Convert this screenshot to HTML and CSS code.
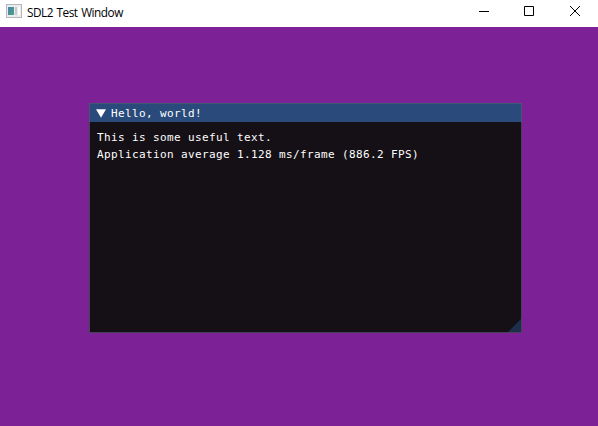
FILE: index.html
```
<!DOCTYPE html>
<html lang="en">
<head>
<meta charset="utf-8">
<title>SDL2 Test Window</title>
<link rel="stylesheet" href="styles.css">
</head>
<body>
<header class="titlebar">
  <svg class="app-icon" width="16" height="14" viewBox="0 0 16 14" shape-rendering="crispEdges">
    <defs><linearGradient id="pane" x1="0" y1="0" x2="1" y2="1"><stop offset="0" stop-color="#4a80ad"/><stop offset="1" stop-color="#4fa282"/></linearGradient></defs>
    <rect x="0.5" y="0.5" width="15" height="13" fill="#e9ebed" stroke="#b3b8bf"/>
    <rect x="2" y="3" width="6" height="8" fill="url(#pane)"/>
    <rect x="9" y="3" width="2" height="8" fill="#c3cdd3"/>
    <rect x="12" y="3" width="2" height="8" fill="#fff"/>
  </svg>
  <span class="app-title">SDL2 Test Window</span>
  <div class="controls">
    <svg width="11" height="10" viewBox="0 0 11 10"><path d="M1 5.5H11"/></svg>
    <svg width="10" height="10" viewBox="0 0 10 10"><path d="M.5.5H9.5V9.5H.5Z"/></svg>
    <svg width="10" height="10" viewBox="0 0 10 10"><path d="M0 0L10 10M10 0L0 10"/></svg>
  </div>
</header>
<main class="canvas">
  <section class="panel">
    <div class="panel-head">
      <svg class="arrow" width="10" height="9" viewBox="0 0 10 9"><path d="M0 .2H10L5 8.8Z" fill="#fff"/></svg>
      <span>Hello, world!</span>
    </div>
    <div class="panel-body">
      <p>This is some useful text.</p>
      <p>Application average 1.128 ms/frame (886.2 FPS)</p>
    </div>
    <svg class="grip" width="13" height="13" viewBox="0 0 13 13"><path d="M13 0V13H0Z" fill="#1d2f4b"/></svg>
  </section>
</main>
</body>
</html>
```
FILE: styles.css
```
* { box-sizing: border-box; }
body {
  margin: 0;
  height: 426px;
  display: flex;
  flex-direction: column;
  overflow: hidden;
  background: #7c2196;
}
.titlebar {
  height: 27px;
  flex: none;
  display: flex;
  align-items: flex-start;
  padding-left: 6px;
  background: #fff;
}
.app-icon { margin-top: 4px; }
.app-title {
  margin-left: 5px;
  font: 11.8px/24px "Open Sans", "Noto Sans", sans-serif;
  letter-spacing: -0.5px;
  word-spacing: 1.1px;
  color: #000;
}
.controls {
  margin-left: auto;
  padding: 6px 18px 0 0;
  display: flex;
  gap: 36px;
}
.controls path { fill: none; stroke: #000; }
.controls svg:first-child { margin-right: -1px; }
.canvas {
  flex: 1;
  padding: 76px 0 0 89px;
  background: #7c2196;
}
.panel {
  position: relative;
  width: 433px;
  height: 230px;
  border: 1px solid #47415b;
  background: #151016;
  color: #fff;
  font: 11px/17px "DejaVu Sans Mono", monospace;
  letter-spacing: 0.378px;
  white-space: nowrap;
}
.panel-head {
  display: flex;
  align-items: center;
  height: 18px;
  padding-left: 6px;
  gap: 5px;
  background: #294a7a;
  box-shadow: 0 0 0 1px #405872;
  clip-path: inset(-1px -1px 0 -1px);
}
.panel-body { padding: 7px 7px 0; }
.panel-body p { margin: 0; }
.grip {
  position: absolute;
  right: 0;
  bottom: 0;
}
```
